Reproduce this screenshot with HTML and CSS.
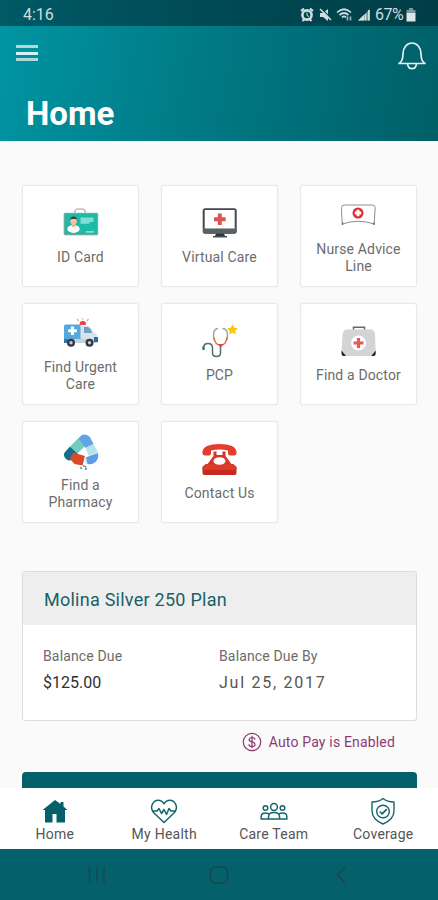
FILE: index.html
```html
<!DOCTYPE html>
<html lang="en">
<head>
<meta charset="utf-8">
<title>Home</title>
<link rel="stylesheet" href="styles.css">
</head>
<body>
<div class="app">
  <header class="header">
    <div class="status">
      <span class="time">4:16</span>
      <div class="indicators">
        <svg width="75" height="16" viewBox="0 0 75 16" class="status-icons">
          <circle cx="7" cy="8" r="4.600" fill="none" stroke="#cfdddf" stroke-width="2.600"/>
          <path d="M1 4l3-2.500M13 4l-3-2.500M2.500 14l2-2M11.500 14l-2-2" stroke="#cfdddf" stroke-width="2.200"/>
          <path d="M7 5.500v3l2 1" fill="none" stroke="#cfdddf" stroke-width="1"/>
          <path d="M20 6h3l5-4v12l-5-4h-3z" fill="#cfdddf"/>
          <path d="M20.500 1l12 11.500" stroke="#0a4048" stroke-width="1.200"/>
          <path d="M20 2l11 11" stroke="#cfdddf" stroke-width="1.600"/>
          <path d="M37 5.500q7-6.500 14 0M39.500 8q4.500-4 9 0M42 10.300q2-1.700 4 0" fill="none" stroke="#cfdddf" stroke-width="1.700"/>
          <path d="M47.500 13.500v-4M50.500 9.500v4" stroke="#9db8bc" stroke-width="1.600"/>
          <path d="M58 13.500L70 2v11.500z" fill="#6f9298"/>
          <path d="M58 13.500l6-5.700v5.700z" fill="#cfdddf"/>
          <path d="M65.500 13.500V7M68.800 13.500V3" stroke="#cfdddf" stroke-width="1.800"/>
        </svg>
        <span class="percent">67%</span>
        <svg width="10" height="14" viewBox="0 0 10 14" class="battery"><path d="M3 0h4v2h2.500v3h-9v-3H3z" fill="#78999e"/><path d="M.5 5h9v8.500h-9z" fill="#dce6e7"/></svg>
      </div>
    </div>
    <div class="toolbar">
      <div class="menu"><i></i><i></i><i></i></div>
      <svg width="30" height="30" viewBox="0 0 30 30" class="bell" fill="none" stroke="#e4f1f2" stroke-width="1.700" stroke-linejoin="round">
        <path d="M2 22.500c3.500-2.500 3.800-5 4-10 .2-6 4-10.500 9-10.500s8.800 4.500 9 10.500c.2 5 .5 7.500 4 10zM10.500 22.800c.8 6.500 8.200 6.500 9 0"/>
      </svg>
    </div>
    <h1 class="title">Home</h1>
  </header>

  <main class="content">
    <section class="tiles">
      <div class="tile">
        <svg class="icon" viewBox="0 0 36 36">
          <path d="M11.500 7.500q0-4.500 4-4.500h3q4 0 4 4.500" fill="none" stroke="#b9bec0" stroke-width="1.400"/>
          <rect x="1.200" y="7.300" width="33.500" height="21.500" rx="1" fill="#1fb9a8" stroke="#71a39f"/>
          <path d="M17.500 11.500h13v4.500h-4v1.800h-9zM23 25h8v1.800h-8z" fill="#83ded2"/>
          <ellipse cx="10.500" cy="23" rx="6.200" ry="3.900" fill="#fff"/>
          <path d="M8.800 16h3.600v5h-3.600z" fill="#efb98f"/>
          <circle cx="10.600" cy="15" r="3.300" fill="#f4c49e"/>
          <path d="M7 14.500c0-5.500 7.200-5.500 7.200 0l-1-1.600h-5z" fill="#413d38"/>
        </svg>
        <span class="label">ID Card</span>
      </div>
      <div class="tile">
        <svg class="icon" viewBox="0 0 36 36">
          <path d="M14 27h8l1 3.500h-10z" fill="#30363a"/><path d="M11 30h14v1.500H11z" fill="#474c50"/>
          <rect x=".7" y="2.200" width="34" height="25.500" rx="2.500" fill="#41474b"/>
          <path d="M1 22.500h33.500V25q0 2.500-2.500 2.500H3.500Q1 27.500 1 25z" fill="#5a6064"/>
          <rect x="2.700" y="4" width="30" height="18.500" fill="#fff"/>
          <path d="M15.800 7.500h4v3.700h3.900v4h-3.900v3.700h-4v-3.700h-3.900v-4h3.900z" fill="#dc5354"/>
        </svg>
        <span class="label">Virtual Care</span>
      </div>
      <div class="tile">
        <svg class="icon" viewBox="0 0 36 36">
          <path d="M1.300 26L.3 9.500Q.3 7 3.500 7h27.500q3.200 0 3.200 2.500L33.200 26Q17.500 20.500 1.300 26z" fill="#fff" stroke="#8b8e90" stroke-width="1"/>
          <path d="M1.500 24.500v2.500M33 24.500v2.500" stroke="#6e7173" stroke-width="1.500"/>
          <circle cx="17" cy="15" r="5.500" fill="#e12d2d"/>
          <path d="M17 11.800v6.400M13.800 15h6.400" stroke="#fff" stroke-width="2.800"/>
        </svg>
        <span class="label">Nurse Advice Line</span>
      </div>
      <div class="tile">
        <svg class="icon" viewBox="0 0 36 36">
          <path d="M16.800 9V6q3-2 6 0v3z" fill="#ef4434"/><path d="M15.500 5l-1.500-2M19.800 3.500V2M24 5l1.500-2" stroke="#f5a191" stroke-width="1.300"/>
          <path d="M17 10h7q4.500 0 6 6l4 3v8H17z" fill="#d9e2ea"/>
          <path d="M21 11h3.500q3 .5 4.500 6h-8z" fill="#6e9fc4"/>
          <path d="M1 10q0-1.500 2-1.500h14.500V23H1z" fill="#55a7dc"/>
          <path d="M1 23h33.800v4H1z" fill="#c6d0db"/><path d="M31 21h4v5h-4z" fill="#34679c"/><path d="M1 23h4v4H1z" fill="#3274a9"/>
          <path d="M9.500 10.500v8.500M5.200 14.800h8.600" stroke="#fff" stroke-width="3"/>
          <circle cx="8" cy="26.700" r="4" fill="#303747"/><circle cx="8" cy="26.700" r="1.700" fill="#c5cbd2"/>
          <circle cx="26.500" cy="26.700" r="4" fill="#303747"/><circle cx="26.500" cy="26.700" r="1.700" fill="#c5cbd2"/>
        </svg>
        <span class="label">Find Urgent Care</span>
      </div>
      <div class="tile">
        <svg class="icon" viewBox="0 0 36 36" fill="none" stroke-width="1.500">
          <path d="M16 4.500c-3.500 0-4.500 3-4.500 7q0 3 1 5M20.500 4.500c4 0 5 3 5 7q0 3-1 5" stroke="#9ba4a6"/>
          <path d="M12 13.500q1 7.500 6.500 7.500t6.500-7.500" stroke="#e96950"/>
          <path d="M18.500 21v8q0 3.500-4 3.500t-4-3.500v-5q0-4.500-4.500-4.500T1.500 24" stroke="#566c70"/>
          <path d="M16 20h5.500l-1.500 2.500h-2.500z" fill="#dc4939"/>
          <path d="M1.500 22.500v3.500" stroke="#35746f" stroke-width="2.400"/>
          <path d="M30.500 .2l1.700 3.500 3.700.5-2.700 2.700.7 3.700-3.400-1.800-3.400 1.800.7-3.700-2.700-2.700 3.700-.5z" fill="#fdc60b"/>
        </svg>
        <span class="label">PCP</span>
      </div>
      <div class="tile">
        <svg class="icon" viewBox="0 0 36 36">
          <path d="M12.500 6V3.300h11V6" fill="none" stroke="#63686b" stroke-width="1.500"/>
          <path d="M6 5.500h24q3.500 0 4 5L34.700 29q0 3-3 3H3.500q-3 0-3-3l1-18.500Q2.500 5.500 6 5.500z" fill="#d2d4d5"/>
          <path d="M.5 26.500L5 32H2.700Q.5 32 .5 29.500zM34.700 26.500L30.200 32h2.300q2.200 0 2.200-2.500z" fill="#222628"/>
          <circle cx="17.500" cy="19" r="7.500" fill="#fff"/>
          <path d="M17.500 14v10M12.500 19h10" stroke="#e15b58" stroke-width="3.200"/>
        </svg>
        <span class="label">Find a Doctor</span>
      </div>
      <div class="tile">
        <svg class="icon" viewBox="0 0 36 36" fill="none">
          <path d="M7 12.500L15.500 4l7.500 7-8.500 8.500z" fill="#72cdbc"/>
          <path d="M7 12.500l7.500 7-4 5.500Q6 28 2.500 24.500-.5 21 2 18z" fill="#176d8b"/>
          <path d="M15.500 4.500Q19-1 24 1q3.500 1.500 4.500 5l2 4-8 4-4-5.500z" fill="#62a3e8"/>
          <path d="M22.500 14l8-4 4.500 8.500-9 3.500z" fill="#b5e4e7"/>
          <path d="M10 18.500l12 3.500-2.500 9.500-8-1.500-4.500-5z" fill="#d94c27"/>
          <path d="M22.500 23.500l12.500-4.500q1 6-2.500 9-3.500 3-8 2z" fill="#5c9de8"/>
          <path d="M21 23l3 2-1.500 2 2 2-2.500 1z" fill="#d7ecf5"/>
          <path d="M17 34h2M22.500 32v1.500M23 34v2M20 32h1.500" stroke="#5484a3" stroke-width="1.600"/>
        </svg>
        <span class="label">Find a Pharmacy</span>
      </div>
      <div class="tile">
        <svg class="icon" viewBox="0 0 36 36">
          <path d="M.5 11.500C-.3 5 6.500 2 17.500 2S35.300 5 34.500 11.500q-.3 2-2.500 2h-4q-2 0-2-2.500V8.500q-8.500-2-17 0V11q0 2.500-2 2.500H3q-2.200 0-2.500-2z" fill="#e43c2e"/>
          <path d="M11.500 9.500h3V13h6V9.500h3V14l7.500 10H4l7.500-10z" fill="#d83428"/>
          <path d="M4 22h27l3.500 3v6q0 2-2 2h-30q-2 0-2-2v-6z" fill="#c52a20"/><path d="M4 22h27l3.500 3v3H.5v-3z" fill="#dd3a2c"/>
          <ellipse cx="17.500" cy="19" rx="6" ry="3.800" fill="#fff"/>
        </svg>
        <span class="label">Contact Us</span>
      </div>
    </section>

    <section class="plan">
      <h2 class="plan-name">Molina Silver 250 Plan</h2>
      <div class="plan-body">
        <div class="col"><span class="key">Balance Due</span><span class="amount">$125.00</span></div>
        <div class="col"><span class="key">Balance Due By</span><span class="date">Jul 25, 2017</span></div>
      </div>
    </section>
    <div class="autopay">
      <svg width="20" height="20" viewBox="0 0 20 20" fill="none" stroke="#8b3a70" stroke-width="1.200"><circle cx="10" cy="10" r="8.700"/><path d="M13 7.500q-.5-2-3-2t-2.800 2q0 1.800 2.800 2.400t3 2.600q-.2 2.200-3 2.200t-3.200-2.300M10 3.800v12.400"/></svg>
      <span>Auto Pay is Enabled</span>
    </div>
    <div class="pay-button"></div>
  </main>

  <nav class="tabs">
    <div class="tab">
      <svg width="28" height="28" viewBox="0 0 28 28"><path d="M14 3L1.500 13H4v12.500h7.500v-8.500h4v8.500H24V13h2.500l-4-3.500V5h-3v2z" fill="#04606a"/></svg>
      <span>Home</span>
    </div>
    <div class="tab">
      <svg width="28" height="28" viewBox="0 0 28 28" fill="none" stroke="#14666e" stroke-width="1.500" stroke-linejoin="round"><path d="M14 25.500L3.500 15.500C-1.500 9 4.500 3.300 8 3.300q4 0 6 3.500 2-3.500 6-3.500c3.500 0 9.500 5.700 4.500 12.200z"/><path d="M2 14h5l2-2.500 2.500 5 2.500-4 2.500 5 2.500-6 2 2.500h5"/></svg>
      <span>My Health</span>
    </div>
    <div class="tab">
      <svg width="28" height="28" viewBox="0 0 28 28" fill="none" stroke="#14666e" stroke-width="1.500"><circle cx="14" cy="10" r="3.400"/><circle cx="5.500" cy="11" r="2.300"/><circle cx="22.500" cy="11" r="2.300"/><path d="M8.500 22v-2.500q0-4 5.500-4t5.500 4V22zM8.500 22H1.200v-2.500q0-3.500 4.300-3.500 2 0 3.200.8M19.500 22h7.300v-2.500q0-3.500-4.300-3.500-2 0-3.200.8"/></svg>
      <span>Care Team</span>
    </div>
    <div class="tab">
      <svg width="28" height="28" viewBox="0 0 28 28" fill="none" stroke="#14666e" stroke-width="1.400" stroke-linejoin="round"><path d="M14 1.500q4 3.500 11 3.500v8.500q0 9-11 13.500-11-4.500-11-13.500V5q7 0 11-3.500z"/><circle cx="14" cy="14.500" r="6.300"/><path d="M10.800 14.500l2.400 2.400 4.500-4.800" stroke-width="1.700"/></svg>
      <span>Coverage</span>
    </div>
  </nav>
  <div class="system">
    <svg width="18" height="18" viewBox="0 0 18 18" stroke="#1d464e" stroke-width="1.500"><path d="M1.500 1v16M9 1v16M16 1v16"/></svg>
    <svg width="20" height="18" viewBox="0 0 20 18" fill="none" stroke="#1d464e" stroke-width="1.500"><rect x="1.500" y="1" width="17" height="16" rx="5"/></svg>
    <svg width="18" height="18" viewBox="0 0 18 18" fill="none" stroke="#1d464e" stroke-width="1.500"><path d="M13 1L5.500 9l7.500 8"/></svg>
  </div>
</div>
</body>
</html>
```

FILE: styles.css
```css
* { box-sizing: border-box; }
body { margin: 0; font-family: Roboto, "Liberation Sans", sans-serif; color: #666; }
svg { display: block; flex: none; }
.app { height: 900px; display: flex; flex-direction: column; overflow: hidden; background: #fafafa; }

.header { height: 141px; flex: none; background: linear-gradient(100deg, #0095a3 0%, #007984 48%, #005f67 100%); }
.status { height: 26px; display: flex; align-items: center; justify-content: space-between; padding: 3px 22px 0 23px; background: rgba(0, 20, 28, .46); color: #cfdddf; font-size: 16px; line-height: 20px; }
.indicators { display: flex; align-items: center; }
.percent { width: 30px; letter-spacing: -.5px; }
.battery { margin-left: 1px; }
.toolbar { height: 60px; display: flex; justify-content: space-between; padding: 15px 11px 0 16px; }
.menu { width: 22px; height: 16px; margin-top: 4px; display: flex; flex-direction: column; justify-content: space-between; }
.menu i { height: 3px; background: #aedadd; }
.menu i:nth-child(2) { background: #d6f2f4; }
.title { margin: 8px 0 0 26px; font-size: 33px; line-height: 40px; font-weight: 700; color: #fff; }

.content { flex: 1; min-height: 0; overflow: hidden; padding: 44px 21px 0 22px; }
.tiles { display: grid; grid-template-columns: repeat(3, 117px); grid-auto-rows: 102px; gap: 16px 22px; }
.tile { display: flex; flex-direction: column; align-items: center; justify-content: center; background: #fff; border: 1px solid #e9e9e9; border-radius: 3px; box-shadow: 0 0 2px rgba(0, 0, 0, .07); }
.icon { width: 36px; height: 36px; margin-bottom: 7px; }
.label { max-width: 94px; text-align: center; font-size: 14px; line-height: 17px; letter-spacing: .15px; color: #6c6c6c; }

.plan { margin-top: 48px; height: 150px; border: 1px solid #dcdcdc; border-radius: 3px; background: #fff; overflow: hidden; }
.plan-name { margin: 0; height: 53px; padding: 3px 0 0 21px; background: #eee; color: #176169; font-weight: 400; font-size: 18px; line-height: 49px; letter-spacing: .25px; }
.plan-body { display: flex; padding: 22px 0 0 20px; }
.col { width: 176px; display: flex; flex-direction: column; line-height: 18px; gap: 9px; }
.key { font-size: 14px; letter-spacing: .15px; color: #6c6c6c; }
.amount { font-size: 16px; color: #303030; }
.date { font-size: 16px; letter-spacing: 1.75px; color: #555; }
.autopay { display: flex; align-items: center; justify-content: flex-end; gap: 7px; height: 20px; margin: 11px 22px 0 0; font-size: 14px; letter-spacing: .17px; color: #8b3a70; }
.pay-button { margin-top: 20px; height: 40px; border-radius: 4px; background: #04606a; }

.tabs { height: 61px; flex: none; display: grid; grid-template-columns: repeat(4, 1fr); padding-top: 9px; background: #fff; }
.tab { display: flex; flex-direction: column; align-items: center; font-size: 14px; line-height: 18px; letter-spacing: .25px; color: #555; }
.system { height: 51px; flex: none; display: flex; align-items: center; justify-content: space-between; padding: 0 88px; background: #04606a; }
```
